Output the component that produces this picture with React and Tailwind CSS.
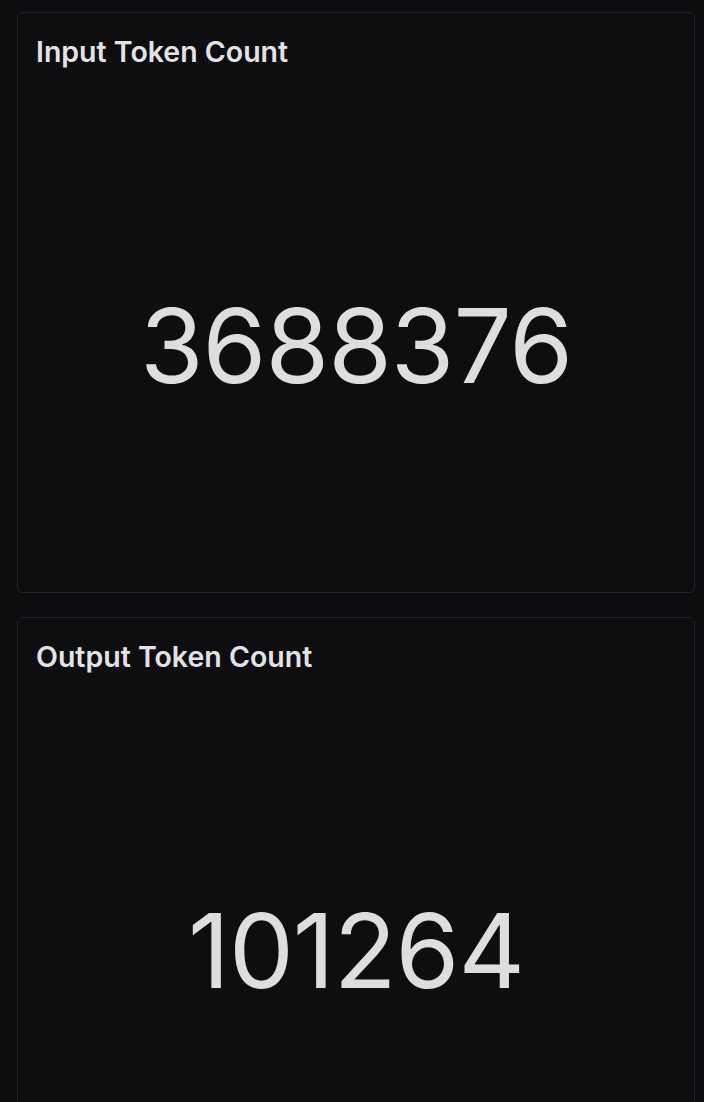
function StatCard({ title, value }) {
  return (
    <div className="flex h-[581px] flex-col rounded-[5px] border border-[#222327] bg-[#0e0e11] px-[18px] pt-[20px]">
      <h2 className="text-[28.5px] font-semibold leading-[38px] text-[#e3e3e5]">{title}</h2>
      <div className="flex flex-1 items-center justify-center pt-[28px]">
        <span className="text-[103px] font-normal leading-none tracking-[-1px] text-[#dedee0]">{value}</span>
      </div>
    </div>
  )
}

export default function App() {
  return (
    <div
      className="min-h-screen bg-[#0d0d10] pl-[17px] pr-[9px] pt-[12px]"
      style={{ fontFamily: 'Inter, "Noto Sans", sans-serif' }}
    >
      <div className="flex flex-col gap-[24px]">
        <StatCard title="Input Token Count" value="3688376" />
        <StatCard title="Output Token Count" value="101264" />
      </div>
    </div>
  )
}
